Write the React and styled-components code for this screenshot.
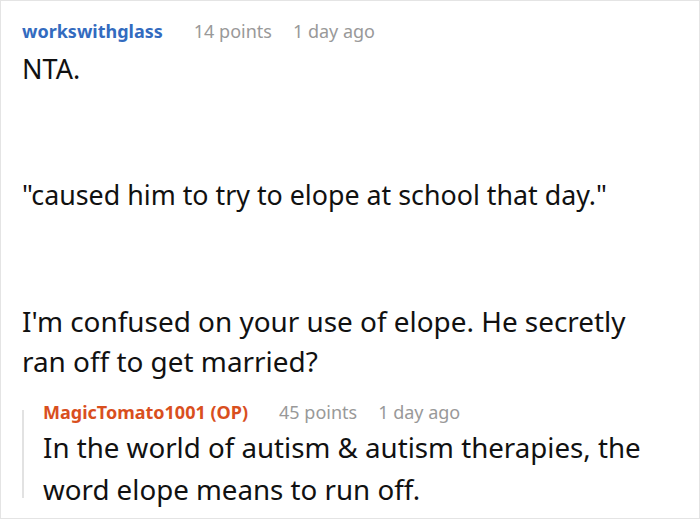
import React from 'react';
import styled, { createGlobalStyle } from 'styled-components';

const GlobalStyle = createGlobalStyle`
    html, body {
        margin: 0;
        padding: 0;
        background: #ffffff;
    }
    body {
        font-family: "Noto Sans", "Open Sans", sans-serif;
    }
`;

const comment = {
    author: 'workswithglass',
    points: 14,
    time: '1 day ago',
    paragraphs: [
        { text: 'NTA.', size: 27 },
        { text: '"caused him to try to elope at school that day."', size: 26.8 },
        { text: "I'm confused on your use of elope. He secretly ran off to get married?", size: 27.9 },
    ],
};

const reply = {
    author: 'MagicTomato1001 (OP)',
    points: 45,
    time: '1 day ago',
    text: 'In the world of autism & autism therapies, the word elope means to run off.',
};

export default () => {
    return (
        <>
            <GlobalStyle />
            <Frame>
                <Meta>
                    <Author>{comment.author}</Author>
                    <Info>{comment.points} points</Info>
                    <Info>{comment.time}</Info>
                </Meta>
                <Body>
                    {comment.paragraphs.map((p, i) => (
                        <Paragraph key={i} $size={p.size}>{p.text}</Paragraph>
                    ))}
                </Body>
                <Reply>
                    <Meta $reply>
                        <Author $op>{reply.author}</Author>
                        <Info>{reply.points} points</Info>
                        <Info>{reply.time}</Info>
                    </Meta>
                    <ReplyText>{reply.text}</ReplyText>
                </Reply>
            </Frame>
        </>
    );
};

const Frame = styled.div`
    box-sizing: border-box;
    width: 700px;
    height: 519px;
    border: 1px solid #e4e4e4;
    padding: 18px 20px 0 21px;
    overflow: hidden;
`;

const Meta = styled.div`
    display: flex;
    align-items: baseline;
    gap: 21px;
    height: ${p => (p.$reply ? '26px' : '28px')};
`;

const Author = styled.span`
    font-weight: 700;
    font-size: 18px;
    margin-right: 10px;
    color: ${p => (p.$op ? '#d94f1e' : '#336bbf')};
`;

const Info = styled.span`
    font-size: 18px;
    color: #999999;
`;

const Body = styled.div`
    display: flex;
    flex-direction: column;
    gap: 86px;
    margin-top: 2px;
`;

const Paragraph = styled.p`
    margin: 0;
    font-size: ${p => p.$size}px;
    line-height: 40px;
    color: #111111;
    max-width: 640px;
`;

const Reply = styled.div`
    position: relative;
    margin-top: 19px;
    padding-left: 21px;

    &::before {
        content: '';
        position: absolute;
        left: 0;
        top: 10px;
        bottom: 12px;
        width: 2px;
        background: #e2e2e2;
    }
`;

const ReplyText = styled.p`
    margin: 0;
    font-size: 27.7px;
    line-height: 42px;
    color: #111111;
`;
